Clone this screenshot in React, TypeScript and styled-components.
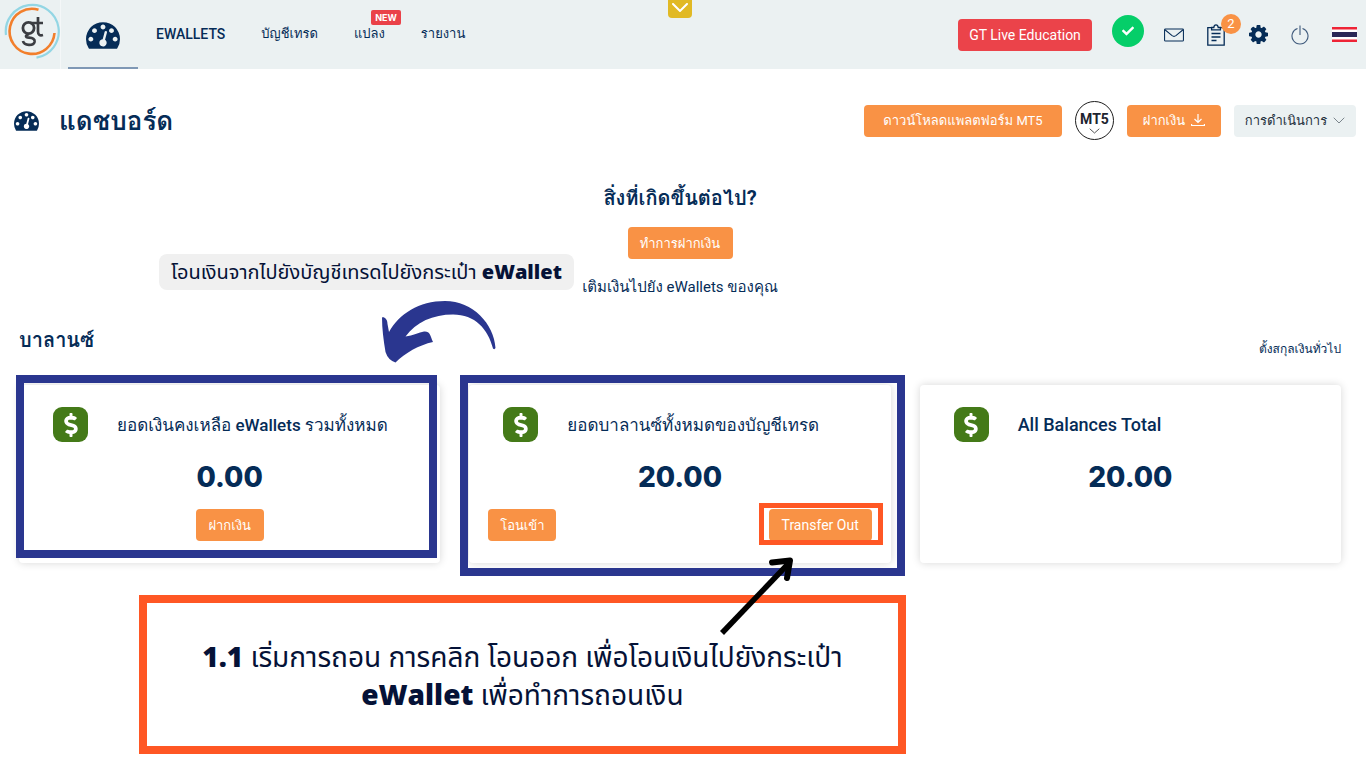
import React from "react";
import styled, { createGlobalStyle, css } from "styled-components";
import { FaCheck, FaDollarSign } from "react-icons/fa";

const navy = "#052c57";
const ink = "#051237";
const orange = "#f99245";
const frameBlue = "#2a368f";
const frameOrange = "#ff5724";

const GlobalStyle = createGlobalStyle`
  *, *::before, *::after { box-sizing: border-box; }
  body {
    margin: 0;
    background: #fff;
    color: ${navy};
    font-family: Roboto, Loma, "Noto Sans Thai", sans-serif;
    font-size: 14px;
  }
  h1, h2, h3, p { margin: 0; }
  button { font: inherit; cursor: pointer; }
  svg { display: block; }
`;

const Header = styled.header`
  position: relative;
  display: flex;
  align-items: center;
  justify-content: space-between;
  height: 69px;
  padding-right: 9px;
  background: #ebf1f2;
`;

const Side = styled.div`
  display: flex;
  align-items: center;
  align-self: stretch;
`;

const LogoLink = styled.a`
  align-self: stretch;
  padding: 3px 0 0 4px;
  width: 61px;
  margin-right: 7px;
  border-right: 1px solid #f4f7f8;
`;

const Nav = styled.nav`
  display: flex;
  align-self: stretch;
`;

const NavLink = styled.a<{ $active?: boolean; $latin?: boolean }>`
  position: relative;
  display: flex;
  align-items: center;
  padding: 0 18px 2px;
  color: ${navy};
  font-size: ${(p) => (p.$latin ? 14 : 13)}px;
  font-weight: ${(p) => (p.$latin ? 500 : 400)};
  text-decoration: none;
  ${(p) =>
    p.$active &&
    css`
      padding: 3px 18px 0;
      border-bottom: 2px solid #7f98b5;
    `}
`;

const NewTag = styled.span`
  position: absolute;
  top: 10px;
  right: 2px;
  padding: 0 4px;
  border-radius: 2px;
  background: #ea4249;
  color: #fff;
  font: 700 9px/15px Inter, sans-serif;
`;

const PullTab = styled.button`
  position: absolute;
  top: 0;
  left: 50%;
  display: flex;
  align-items: flex-start;
  width: 24px;
  height: 18px;
  margin-left: -15px;
  padding: 3px 4px;
  border: 0;
  border-radius: 0 0 4px 4px;
  background: #e1b924;
`;

const Alerts = styled.div`
  display: flex;
  align-items: center;
  gap: 20px;
`;

const Tools = styled.div`
  display: flex;
  align-items: center;
  gap: 22px;
`;

const IconButton = styled.button`
  position: relative;
  display: flex;
  align-items: center;
  justify-content: center;
  width: 20px;
  height: 26px;
  padding: 0;
  border: 0;
  background: none;
  color: ${navy};
`;

const FlagButton = styled(IconButton)`
  width: 25px;
`;

const StatusButton = styled(IconButton)`
  width: 32px;
  height: 32px;
  margin-bottom: 8px;
  border-radius: 50%;
  background: #05ce69;
  color: #fff;
`;

const CountBadge = styled.span`
  position: absolute;
  top: -8px;
  left: 15px;
  width: 20px;
  border-radius: 10px;
  background: ${orange};
  color: #fff;
  font-size: 13px;
  line-height: 20px;
`;

const Button = styled.button<{ $tone?: "red" | "grey"; $width?: number; $latin?: boolean }>`
  display: inline-flex;
  align-items: center;
  justify-content: center;
  gap: 6px;
  height: 32px;
  padding: 0 10px;
  border: 0;
  border-radius: 4px;
  background: ${(p) =>
    p.$tone === "red" ? "#eb434a" : p.$tone === "grey" ? "#ebf1f2" : orange};
  color: ${(p) => (p.$tone === "grey" ? "#24303c" : "#fff")};
  font-size: ${(p) => (p.$latin ? 14 : 13)}px;
  white-space: nowrap;
  ${(p) => p.$width && `min-width: ${p.$width}px;`}
`;

const TitleBar = styled.div`
  display: flex;
  align-items: center;
  justify-content: space-between;
  padding: 32px 10px 0 14px;
`;

const Title = styled.h1`
  display: flex;
  align-items: center;
  gap: 20px;
  font-size: 26px;
  font-weight: 700;
  line-height: 36px;
`;

const Actions = styled.div`
  display: flex;
  align-items: center;
  gap: 13px;
`;

const PlatformButton = styled.button`
  display: flex;
  flex-direction: column;
  align-items: center;
  width: 39px;
  height: 39px;
  padding: 8px 0 0;
  border: 1px solid #1d1d1d;
  border-radius: 50%;
  background: #fff;
  color: #1d2430;
  font-weight: 700;
  line-height: 18px;
`;

const Content = styled.main`
  padding: 0 25px 24px 19px;
`;

const NextStep = styled.section`
  position: relative;
  display: flex;
  flex-direction: column;
  align-items: center;
  padding-top: 43px;
`;

const NextHeading = styled.h2`
  margin-bottom: 14px;
  font-size: 20px;
  font-weight: 700;
  line-height: 30px;
`;

const NextText = styled.p`
  margin-top: 16px;
  font-size: 15px;
  line-height: 24px;
`;

const TransferNote = styled.p`
  position: absolute;
  top: 114px;
  left: 140px;
  padding: 0 12px;
  border-radius: 8px;
  background: #f0f0f0;
  color: ${ink};
  font-family: "Open Sans", "Noto Sans Thai", sans-serif;
  font-size: 20px;
  line-height: 36px;
  white-space: nowrap;
`;

const CurvedArrow = styled.svg`
  position: absolute;
  top: 160px;
  left: 362px;
`;

const BalanceBar = styled.div`
  display: flex;
  justify-content: space-between;
  align-items: flex-end;
  margin: 24px 0 28px;
`;

const BalanceHeading = styled.h2`
  font-size: 20px;
  font-weight: 700;
  line-height: 34px;
`;

const CurrencyLink = styled.a`
  color: ${navy};
  font-size: 12px;
  line-height: 16px;
  text-decoration: none;
`;

const Cards = styled.div`
  display: grid;
  grid-template-columns: repeat(3, 1fr);
  gap: 29px;
`;

const Card = styled.section`
  position: relative;
  min-height: 178px;
  padding: 22px 19px;
  border-radius: 4px;
  background: #fff;
  box-shadow: 0 0 8px rgba(0, 0, 0, 0.16);
`;

const CardHead = styled.div`
  display: flex;
  align-items: center;
  gap: 29px;
  padding-left: 15px;
`;

const Coin = styled.span`
  display: flex;
  align-items: center;
  justify-content: center;
  width: 35px;
  height: 35px;
  border-radius: 9px;
  background: #447a18;
  color: #fff;
`;

const CardTitle = styled.h3<{ $latin?: boolean }>`
  font-size: ${(p) => (p.$latin ? 18 : 17)}px;
  font-weight: 500;
  line-height: 24px;
`;

const Amount = styled.p`
  margin: 17px 0 14px;
  font: 800 28px/36px Inter, sans-serif;
  text-align: center;
`;

const CardActions = styled.div<{ $spread?: boolean }>`
  display: flex;
  justify-content: ${(p) => (p.$spread ? "space-between" : "center")};
`;

const Frame = styled.span<{ $inset: string; $color: string; $size: number }>`
  position: absolute;
  inset: ${(p) => p.$inset};
  border: ${(p) => p.$size}px solid ${(p) => p.$color};
  pointer-events: none;
`;

const Anchor = styled.div`
  position: relative;
  display: flex;
`;

const Step = styled.aside`
  position: relative;
  width: 58%;
  margin: 32px 0 0 120px;
  padding: 34px 20px 33px;
  border: 8px solid ${frameOrange};
  background: #fff;
  color: ${ink};
  font-family: "Open Sans", "Noto Sans Thai", sans-serif;
  font-size: 28px;
  line-height: 38px;
  text-align: center;
`;

const Strong = styled.strong`
  font-weight: 800;
`;

const StepArrow = styled.svg`
  position: absolute;
  top: -47px;
  right: 104px;
`;

const Gauge = ({ width, height }: { width: number; height: number }) => (
  <svg width={width} height={height} viewBox="0 256 1792 1408" fill={navy} aria-hidden="true">
    <path d="M384 1152q0-53-37.5-90.5t-90.5-37.5-90.5 37.5-37.5 90.5 37.5 90.5 90.5 37.5 90.5-37.5 37.5-90.5zm192-448q0-53-37.5-90.5t-90.5-37.5-90.5 37.5-37.5 90.5 37.5 90.5 90.5 37.5 90.5-37.5 37.5-90.5zm428 481l101-382q6-26-7.5-48.5t-38.5-29.5-48 6.5-30 39.5l-101 382q-60 5-107 43.5t-63 98.5q-20 77 20 146t117 89 146-20 89-117q16-60-6-117t-72-91zm660-33q0-53-37.5-90.5t-90.5-37.5-90.5 37.5-37.5 90.5 37.5 90.5 90.5 37.5 90.5-37.5 37.5-90.5zm-640-640q0-53-37.5-90.5t-90.5-37.5-90.5 37.5-37.5 90.5 37.5 90.5 90.5 37.5 90.5-37.5 37.5-90.5zm448 192q0-53-37.5-90.5t-90.5-37.5-90.5 37.5-37.5 90.5 37.5 90.5 90.5 37.5 90.5-37.5 37.5-90.5zm320 448q0 261-141 483-19 29-54 29h-1402q-35 0-54-29-141-221-141-483 0-182 71-348t191-286 286-191 348-71 348 71 286 191 191 286 71 348z" />
  </svg>
);

const Logo = () => (
  <svg width="56" height="56" viewBox="0 0 56 56" fill="none" aria-hidden="true">
    <path d="M2 32A26.5 26.5 0 1 1 32.500 54.600" stroke="#93d6e4" strokeWidth="2.200" />
    <path d="M34.500 6.800A22.500 22.500 0 1 0 50.500 30" stroke="#f27f2c" strokeWidth="2.600" />
    <circle cx="24.500" cy="25" r="5.600" stroke="#3b3d42" strokeWidth="2.800" />
    <path
      d="M39 20H26M34 14v14.500c0 3 1.500 4.500 5 3.500M25 31c-4 1.500-4 3.500 0 3.700 4 .300 6 1.300 5.600 4-.800 4.300-10.600 4.300-11.600-.700"
      stroke="#3b3d42"
      strokeWidth="2.700"
    />
  </svg>
);

const Chevron = ({ width, height, stroke, weight }: { width: number; height: number; stroke: string; weight: number }) => (
  <svg width={width} height={height} viewBox={`0 0 ${width} ${height}`} fill="none" aria-hidden="true">
    <path d={`M1 1L${width / 2} ${height - 1}L${width - 1} 1`} stroke={stroke} strokeWidth={weight} strokeLinecap="round" />
  </svg>
);

const Mail = () => (
  <svg width="21" height="14" viewBox="0 0 21 14" fill="none" stroke={navy} aria-hidden="true">
    <rect x=".6" y=".6" width="19.800" height="12.800" rx="1" strokeWidth="1.100" />
    <path d="M1 1.500l7.500 6.200q2 1.500 4 0L20 1.500" strokeWidth="1.100" />
  </svg>
);

const Clipboard = () => (
  <svg width="18" height="22" viewBox="0 0 18 22" fill="none" stroke={navy} strokeWidth="1.300" aria-hidden="true">
    <path d="M4.500 3.600H.8v17.600h16.400V3.600h-3.700" />
    <path d="M4.600 5.800V3.500h2.200C7 1.800 7.900.8 9 .8s2 1 2.200 2.700h2.200v2.300z" />
    <path d="M4.500 9.500h9M4.500 13h9M4.500 16.500h5" />
  </svg>
);

const Cog = () => (
  <svg width="19" height="19" viewBox="128 128 1536 1536" fill={navy} aria-hidden="true">
    <path d="M1152 896q0-106-75-181t-181-75-181 75-75 181 75 181 181 75 181-75 75-181zm512-109v222q0 12-8 23t-20 13l-185 28q-19 54-39 91 35 50 107 138 10 12 10 25t-9 23q-27 37-99 108t-94 71q-12 0-26-9l-138-108q-44 23-91 38-16 136-29 186-7 28-36 28h-222q-14 0-24.500-8.500t-11.500-21.500l-28-184q-49-16-90-37l-141 107q-10 9-25 9-14 0-25-11-126-114-165-168-7-10-7-23 0-12 8-23 15-21 51-66.500t54-70.500q-27-50-41-99l-183-27q-13-2-21-12.500t-8-23.500v-222q0-12 8-23t19-13l186-28q14-46 39-92-40-57-107-138-10-12-10-24 0-10 9-23 26-36 98.500-107.500t94.500-71.500q13 0 26 10l138 107q44-23 91-38 16-136 29-186 7-28 36-28h222q14 0 24.500 8.500t11.500 21.500l28 184q49 16 90 37l142-107q9-9 24-9 13 0 25 10 129 119 165 170 7 8 7 22 0 12-8 23-15 21-51 66.500t-54 70.500q26 50 41 98l183 28q13 2 21 12.500t8 23.500z" />
  </svg>
);

const Power = () => (
  <svg width="18" height="20" viewBox="0 0 18 20" fill="none" stroke="#3f5a7c" strokeWidth="1.100" aria-hidden="true">
    <path d="M6.500 3.400a8 8 0 1 0 5 0M9 .500V10" />
  </svg>
);

const ThaiFlag = () => (
  <svg width="25" height="15" viewBox="0 0 25 15" aria-hidden="true">
    <rect width="25" height="15" fill="#fff" />
    <rect width="25" height="2.500" fill="#ee2436" />
    <rect y="5" width="25" height="5" fill="#2a2756" />
    <rect y="12.500" width="25" height="2.500" fill="#ee2436" />
  </svg>
);

const Download = () => (
  <svg width="14" height="13" viewBox="0 0 14 13" fill="none" stroke="#fff" strokeWidth="1.200" aria-hidden="true">
    <path d="M7 0v8.500M3.500 5L7 8.500 10.500 5M.6 10v1.500h12.800V10" />
  </svg>
);

const CoinIcon = () => (
  <Coin>
    <FaDollarSign size={24} aria-hidden="true" />
  </Coin>
);

export default function App() {
  return (
    <>
      <GlobalStyle />
      <Header>
        <Side>
          <LogoLink href="#" aria-label="GT">
            <Logo />
          </LogoLink>
          <Nav>
            <NavLink href="#" $active aria-label="แดชบอร์ด">
              <Gauge width={34} height={27} />
            </NavLink>
            <NavLink href="#" $latin>EWALLETS</NavLink>
            <NavLink href="#">บัญชีเทรด</NavLink>
            <NavLink href="#">
              แปลง
              <NewTag>NEW</NewTag>
            </NavLink>
            <NavLink href="#">รายงาน</NavLink>
          </Nav>
        </Side>
        <PullTab aria-label="Expand">
          <Chevron width={16} height={9} stroke="#fff" weight={2} />
        </PullTab>
        <Alerts>
          <Button $tone="red" $width={134} $latin>GT Live Education</Button>
          <StatusButton aria-label="Verified">
            <FaCheck size={12} />
          </StatusButton>
          <Tools>
            <IconButton aria-label="Messages"><Mail /></IconButton>
            <IconButton aria-label="Tasks">
              <Clipboard />
              <CountBadge>2</CountBadge>
            </IconButton>
            <IconButton aria-label="Settings"><Cog /></IconButton>
            <IconButton aria-label="Log out"><Power /></IconButton>
            <FlagButton aria-label="Language"><ThaiFlag /></FlagButton>
          </Tools>
        </Alerts>
      </Header>

      <TitleBar>
        <Title>
          <Gauge width={25} height={20} />
          แดชบอร์ด
        </Title>
        <Actions>
          <Button $width={198}>ดาวน์โหลดแพลตฟอร์ม MT5</Button>
          <PlatformButton>
            MT5
            <Chevron width={11} height={6} stroke="#555" weight={1} />
          </PlatformButton>
          <Button $width={94}>ฝากเงิน <Download /></Button>
          <Button $tone="grey" $width={122}>
            การดำเนินการ <Chevron width={12} height={7} stroke="#7b858c" weight={1} />
          </Button>
        </Actions>
      </TitleBar>

      <Content>
        <NextStep>
          <NextHeading>สิ่งที่เกิดขึ้นต่อไป?</NextHeading>
          <Button $width={105}>ทำการฝากเงิน</Button>
          <NextText>เติมเงินไปยัง eWallets ของคุณ</NextText>
          <TransferNote>
            โอนเงินจากไปยังบัญชีเทรดไปยังกระเป๋า <Strong>eWallet</Strong>
          </TransferNote>
          <CurvedArrow width="116" height="64" viewBox="0 0 116 64" fill={frameBlue} aria-hidden="true">
            <path d="M1 17.500C3 16.500 6.500 19 6.500 24L8 32C18 14 38 1 64 1C92 1 113 24 114.500 48q-1 2-2.500 .5C107 29 94 14.500 72 14.500C52 14.500 35 22 24.500 36.500C32 35.500 38 32.500 43 31.500C49 31 49 35 52 42C38 45 24 53 14.500 62.500Q7 60 4.500 52C2.500 40 1 29 1 17.500z" />
          </CurvedArrow>
        </NextStep>

        <BalanceBar>
          <BalanceHeading>บาลานซ์</BalanceHeading>
          <CurrencyLink href="#">ตั้งสกุลเงินทั่วไป</CurrencyLink>
        </BalanceBar>

        <Cards>
          <Card>
            <CardHead>
              <CoinIcon />
              <CardTitle>ยอดเงินคงเหลือ eWallets รวมทั้งหมด</CardTitle>
            </CardHead>
            <Amount>0.00</Amount>
            <CardActions>
              <Button $width={68}>ฝากเงิน</Button>
            </CardActions>
            <Frame $inset="-10px 3px 5px -3px" $color={frameBlue} $size={8} />
          </Card>
          <Card>
            <CardHead>
              <CoinIcon />
              <CardTitle>ยอดบาลานซ์ทั้งหมดของบัญชีเทรด</CardTitle>
            </CardHead>
            <Amount>20.00</Amount>
            <CardActions $spread>
              <Button $width={68}>โอนเข้า</Button>
              <Anchor>
                <Button $width={103} $latin>Transfer Out</Button>
                <Frame $inset="-6px -11px -4px -10px" $color={frameOrange} $size={5} />
              </Anchor>
            </CardActions>
            <Frame $inset="-10px -14px -13px -9px" $color={frameBlue} $size={8} />
          </Card>
          <Card>
            <CardHead>
              <CoinIcon />
              <CardTitle $latin>All Balances Total</CardTitle>
            </CardHead>
            <Amount>20.00</Amount>
          </Card>
        </Cards>

        <Step>
          <p><Strong>1.1</Strong> เริ่มการถอน การคลิก โอนออก เพื่อโอนเงินไปยังกระเป๋า</p>
          <p><Strong>eWallet</Strong> เพื่อทำการถอนเงิน</p>
          <StepArrow width="76" height="80" viewBox="0 0 76 80" fill="none" stroke="#000" aria-hidden="true">
            <path d="M4 77L71 7" strokeWidth="5.500" />
            <path d="M54 6.500L72 4.500L69 22" strokeWidth="6" strokeLinecap="round" strokeLinejoin="round" />
          </StepArrow>
        </Step>
      </Content>
    </>
  );
}
